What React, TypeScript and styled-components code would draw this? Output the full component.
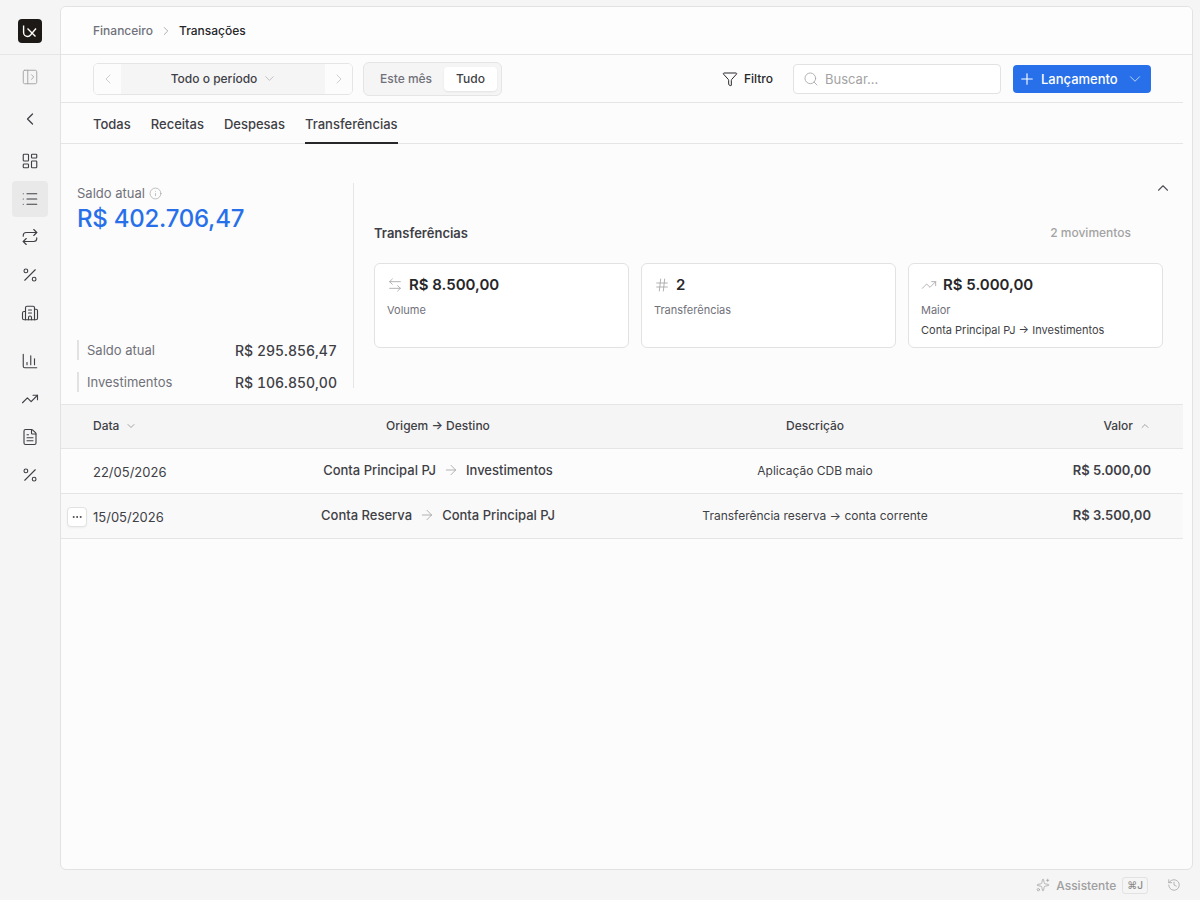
import React from 'react';
import styled, { createGlobalStyle } from 'styled-components';
import {
  ArrowLeftRight,
  ArrowRight,
  Building2,
  ChartColumn,
  ChevronDown,
  ChevronLeft,
  ChevronRight,
  ChevronUp,
  Ellipsis,
  FileText,
  Filter,
  Hash,
  History,
  Info,
  LayoutDashboard,
  List,
  PanelLeftOpen,
  Percent,
  Plus,
  Repeat,
  Search,
  Sparkles,
  TrendingUp,
} from 'lucide-react';

const GlobalStyle = createGlobalStyle`
  * { box-sizing: border-box; }
  html, body { margin: 0; height: 100%; }
  body {
    background: #f5f5f5;
    color: #27272a;
    font-family: Inter, "Noto Sans", sans-serif;
    font-size: 13px;
  }
`;

const Shell = styled.div`
  width: 1200px;
  height: 900px;
  display: flex;
  overflow: hidden;
`;

const Sidebar = styled.aside`
  width: 60px;
  flex: none;
  display: flex;
  flex-direction: column;
`;

const LogoRow = styled.div`
  height: 55px;
  flex: none;
  padding-top: 7px;
  display: flex;
  align-items: center;
  justify-content: center;
  border-bottom: 1px solid #e5e5e5;
`;

const LogoMark = styled.div`
  width: 24px;
  height: 24px;
  border-radius: 4px;
  background: #1c1917;
  display: flex;
`;

const NavList = styled.nav`
  display: flex;
  flex-direction: column;
  align-items: center;
  padding-top: 3px;
`;

const NavItem = styled.div<{ $active?: boolean; $muted?: boolean; $top?: number }>`
  width: 36px;
  height: 36px;
  margin: ${(p) => p.$top ?? 1}px 0 1px;
  border-radius: 4px;
  display: flex;
  align-items: center;
  justify-content: center;
  background: ${(p) => (p.$active ? '#e9e9e9' : 'transparent')};
  color: ${(p) => (p.$muted ? '#a3a3a3' : '#3f3f46')};
`;

const Column = styled.div`
  flex: 1;
  min-width: 0;
  display: flex;
  flex-direction: column;
  padding: 6px 7px 0 0;
`;

const Panel = styled.main`
  height: 864px;
  flex: none;
  background: #fcfcfc;
  border: 1px solid #e2e2e2;
  border-radius: 6px;
  overflow: hidden;
`;

const Breadcrumb = styled.div`
  height: 48px;
  display: flex;
  align-items: center;
  gap: 6px;
  padding-left: 32px;
  background: #fdfdfd;
  border-bottom: 1px solid #e5e5e5;
  font-size: 12px;
  font-weight: 500;
`;

const Crumb = styled.span<{ $current?: boolean }>`
  color: ${(p) => (p.$current ? '#27272a' : '#71717a')};
`;

const Body = styled.div`
  padding-right: 9px;
`;

const Toolbar = styled.div`
  height: 48px;
  display: flex;
  align-items: center;
  padding: 0 32px;
  border-bottom: 1px solid #e5e5e5;
`;

const PeriodNav = styled.div`
  width: 260px;
  height: 32px;
  display: flex;
  border: 1px solid #e5e5e5;
  border-radius: 5px;
  overflow: hidden;
  color: #c4c4c4;
`;

const PeriodArrow = styled.div`
  width: 27px;
  flex: none;
  display: flex;
  align-items: center;
  justify-content: center;
  background: #fcfcfc;
`;

const PeriodLabel = styled.div`
  flex: 1;
  padding-left: 2px;
  display: flex;
  align-items: center;
  justify-content: center;
  gap: 5px;
  background: #f5f5f5;
  color: #3f3f46;
  font-size: 12px;
  font-weight: 500;
`;

const Segment = styled.div`
  height: 34px;
  margin-left: 10px;
  padding: 4px;
  display: flex;
  align-items: center;
  background: #f5f5f5;
  border: 1px solid #e5e5e5;
  border-radius: 6px;
`;

const SegmentItem = styled.div<{ $active?: boolean }>`
  height: 24px;
  padding: 0 12px;
  display: flex;
  align-items: center;
  border-radius: 4px;
  font-size: 12px;
  font-weight: 500;
  color: ${(p) => (p.$active ? '#3f3f46' : '#71717a')};
  background: ${(p) => (p.$active ? '#fff' : 'transparent')};
  box-shadow: ${(p) => (p.$active ? '0 1px 2px rgba(0,0,0,0.08)' : 'none')};
`;

const Spacer = styled.div`
  flex: 1;
`;

const FilterButton = styled.div`
  display: flex;
  align-items: center;
  gap: 6px;
  margin-right: 20px;
  font-size: 12px;
  font-weight: 500;
  color: #27272a;
`;

const SearchBox = styled.div`
  width: 208px;
  height: 30px;
  display: flex;
  align-items: center;
  gap: 6px;
  padding: 0 9px;
  background: #fff;
  border: 1px solid #e2e2e2;
  border-radius: 4px;
  font-size: 13px;
  color: #a3a3a3;
`;

const PrimaryButton = styled.div`
  width: 138px;
  height: 28px;
  margin-left: 12px;
  display: flex;
  align-items: center;
  padding: 0 7px 0 5px;
  gap: 5px;
  background: #2870ea;
  border-radius: 4px;
  color: #fff;
  font-size: 13px;
  font-weight: 500;
`;

const PrimaryCaret = styled.span`
  margin-left: auto;
  display: flex;
  color: #c5d9fa;
`;

const Tabs = styled.div`
  height: 41px;
  display: flex;
  gap: 20px;
  padding: 0 32px;
  border-bottom: 1px solid #e5e5e5;
`;

const Tab = styled.div<{ $active?: boolean }>`
  height: 41px;
  padding-top: 13px;
  font-size: 13px;
  font-weight: 500;
  color: #3f3f46;
  border-bottom: 2px solid ${(p) => (p.$active ? '#27272a' : 'transparent')};
`;

const Summary = styled.section`
  height: 261px;
  position: relative;
  display: flex;
  padding: 39px 20px 16px 16px;
  border-bottom: 1px solid #e5e5e5;
`;

const BalanceColumn = styled.div`
  width: 277px;
  flex: none;
  display: flex;
  flex-direction: column;
  padding-right: 16px;
  border-right: 1px solid #e5e5e5;
`;

const BalanceLabel = styled.div`
  display: flex;
  align-items: center;
  gap: 4px;
  font-size: 13px;
  line-height: 21px;
  color: #71717a;
`;

const BalanceTotal = styled.div`
  font-size: 24px;
  line-height: 30px;
  font-weight: 500;
  letter-spacing: -0.24px;
  color: #2870ea;
`;

const BalanceRows = styled.div`
  margin-top: auto;
  margin-bottom: -4px;
  display: flex;
  flex-direction: column;
  gap: 12px;
`;

const BalanceRow = styled.div`
  height: 20px;
  display: flex;
  align-items: center;
  justify-content: space-between;
  padding-left: 8px;
  border-left: 2px solid #e2e2e2;
  font-size: 13px;
  color: #71717a;
`;

const BalanceValue = styled.span`
  font-size: 14px;
  font-weight: 500;
  font-variant-numeric: tabular-nums;
  color: #3f3f46;
`;

const Detail = styled.div`
  flex: 1;
  min-width: 0;
  display: flex;
  flex-direction: column;
  padding: 41px 0 0 20px;
`;

const DetailHeader = styled.div`
  height: 18px;
  margin-bottom: 21px;
  padding-right: 32px;
  display: flex;
  align-items: center;
  justify-content: space-between;
`;

const DetailTitle = styled.div`
  font-size: 13px;
  font-weight: 600;
  color: #3f3f46;
`;

const DetailCount = styled.div`
  margin-bottom: 2px;
  font-size: 12px;
  font-weight: 500;
  color: #a3a3a3;
`;

const CollapseButton = styled.div`
  position: absolute;
  top: 35px;
  right: 11px;
  display: flex;
  color: #52525b;
`;

const Cards = styled.div`
  display: grid;
  grid-template-columns: repeat(3, 1fr);
  gap: 12px;
`;

const Card = styled.div`
  height: 85px;
  padding: 11px 12px;
  background: #fff;
  border: 1px solid #e2e2e2;
  border-radius: 6px;
`;

const CardValue = styled.div`
  display: flex;
  align-items: center;
  gap: 6px;
  font-size: 15px;
  line-height: 20px;
  font-weight: 600;
  color: #27272a;

  svg {
    color: #a3a3a3;
  }
`;

const CardLabel = styled.div`
  margin-top: 7px;
  font-size: 11px;
  line-height: 16px;
  color: #71717a;
`;

const CardNote = styled.div`
  margin-top: 4px;
  font-size: 11px;
  line-height: 16px;
  color: #3f3f46;
`;

const tableColumns = '170px 350px 404px 1fr';

const TableHead = styled.div`
  height: 44px;
  display: grid;
  grid-template-columns: ${tableColumns};
  align-items: center;
  padding: 0 32px 2px;
  background: #f5f5f5;
  border-bottom: 1px solid #e5e5e5;
  font-size: 12px;
  font-weight: 500;
`;

const HeadCell = styled.div<{ $align?: string }>`
  display: flex;
  align-items: center;
  gap: 6px;
  justify-content: ${(p) => p.$align ?? 'flex-start'};
  color: #3f3f46;

  svg {
    color: #a3a3a3;
  }
`;

const Row = styled.div<{ $hover?: boolean }>`
  height: 45px;
  position: relative;
  display: grid;
  grid-template-columns: ${tableColumns};
  align-items: center;
  padding: 0 32px;
  background: ${(p) => (p.$hover ? '#f9f9f9' : 'transparent')};
  border-bottom: 1px solid #e5e5e5;
  font-size: 12px;
`;

const DateCell = styled.div`
  padding-top: 2px;
  font-size: 13px;
  color: #3f3f46;
`;

const Route = styled.div`
  padding-bottom: 2px;
  display: flex;
  align-items: center;
  justify-content: center;
  gap: 7px;
  font-size: 13px;
  font-weight: 500;
  color: #3f3f46;

  svg {
    color: #a3a3a3;
  }
`;

const DescriptionCell = styled.div`
  padding-bottom: 2px;
  text-align: center;
  color: #3f3f46;
`;

const AmountCell = styled.div`
  padding-bottom: 2px;
  text-align: right;
  font-size: 13px;
  font-weight: 600;
  color: #3f3f46;
`;

const RowAction = styled.div`
  position: absolute;
  left: 6px;
  top: 13px;
  width: 20px;
  height: 20px;
  display: flex;
  align-items: center;
  justify-content: center;
  background: #fff;
  border: 1px solid #e2e2e2;
  border-radius: 4px;
  box-shadow: 0 1px 2px rgba(0, 0, 0, 0.05);
  color: #3f3f46;
`;

const Footer = styled.footer`
  height: 30px;
  padding-right: 12px;
  display: flex;
  align-items: center;
  justify-content: flex-end;
  gap: 6px;
  color: #9f9f9f;
  font-size: 12px;
  font-weight: 500;
`;

const Kbd = styled.span`
  height: 17px;
  margin-right: 13px;
  padding: 0 4px;
  display: flex;
  align-items: center;
  border: 1px solid #e2e2e2;
  border-radius: 3px;
  font-size: 10px;
  color: #8a8a8a;
`;

const navTop = [
  { icon: LayoutDashboard, top: 5 },
  { icon: List, active: true },
  { icon: Repeat },
  { icon: Percent },
  { icon: Building2 },
];

const navBottom = [
  { icon: ChartColumn, top: 11 },
  { icon: TrendingUp },
  { icon: FileText },
  { icon: Percent },
];

const transfers = [
  { date: '22/05/2026', from: 'Conta Principal PJ', to: 'Investimentos', note: 'Aplicação CDB maio', amount: 'R$ 5.000,00' },
  { date: '15/05/2026', from: 'Conta Reserva', to: 'Conta Principal PJ', note: 'Transferência reserva → conta corrente', amount: 'R$ 3.500,00', hover: true },
];

const App: React.FC = () => {
  return (
    <Shell>
      <GlobalStyle />
      <Sidebar>
        <LogoRow>
          <LogoMark>
            <svg width="24" height="24" viewBox="0 0 24 24" fill="none" stroke="#fff" strokeWidth="1.4">
              <path d="M5.6 6.5v7a4 4 0 0 0 4 4 4 4 0 0 0 3-1.5" />
              <path d="M9.5 9.5l8 8M18 9.5l-5.5 6.5" />
            </svg>
          </LogoMark>
        </LogoRow>
        <NavList>
          <NavItem $muted>
            <PanelLeftOpen size={18} strokeWidth={1.25} />
          </NavItem>
          <NavItem $top={5}>
            <ChevronLeft size={20} strokeWidth={1.5} />
          </NavItem>
          {navTop.map((item, index) => (
            <NavItem key={index} $active={item.active} $top={item.top}>
              <item.icon size={18} strokeWidth={1.5} />
            </NavItem>
          ))}
          {navBottom.map((item, index) => (
            <NavItem key={index} $top={item.top}>
              <item.icon size={18} strokeWidth={1.5} />
            </NavItem>
          ))}
        </NavList>
      </Sidebar>
      <Column>
        <Panel>
          <Breadcrumb>
            <Crumb>Financeiro</Crumb>
            <ChevronRight size={14} color="#a3a3a3" strokeWidth={1.5} />
            <Crumb $current>Transações</Crumb>
          </Breadcrumb>
          <Body>
            <Toolbar>
              <PeriodNav>
                <PeriodArrow>
                  <ChevronLeft size={16} strokeWidth={1.25} />
                </PeriodArrow>
                <PeriodLabel>
                  Todo o período
                  <ChevronDown size={15} color="#b4b4b4" strokeWidth={1.25} />
                </PeriodLabel>
                <PeriodArrow>
                  <ChevronRight size={16} strokeWidth={1.25} />
                </PeriodArrow>
              </PeriodNav>
              <Segment>
                <SegmentItem>Este mês</SegmentItem>
                <SegmentItem $active>Tudo</SegmentItem>
              </Segment>
              <Spacer />
              <FilterButton>
                <Filter size={16} strokeWidth={1.5} />
                Filtro
              </FilterButton>
              <SearchBox>
                <Search size={16} strokeWidth={1.25} />
                Buscar...
              </SearchBox>
              <PrimaryButton>
                <Plus size={18} strokeWidth={1.5} />
                Lançamento
                <PrimaryCaret>
                  <ChevronDown size={18} strokeWidth={1.25} />
                </PrimaryCaret>
              </PrimaryButton>
            </Toolbar>
            <Tabs>
              <Tab>Todas</Tab>
              <Tab>Receitas</Tab>
              <Tab>Despesas</Tab>
              <Tab $active>Transferências</Tab>
            </Tabs>
            <Summary>
              <BalanceColumn>
                <BalanceLabel>
                  Saldo atual
                  <Info size={13} color="#a3a3a3" strokeWidth={1.25} />
                </BalanceLabel>
                <BalanceTotal>R$ 402.706,47</BalanceTotal>
                <BalanceRows>
                  <BalanceRow>
                    Saldo atual
                    <BalanceValue>R$ 295.856,47</BalanceValue>
                  </BalanceRow>
                  <BalanceRow>
                    Investimentos
                    <BalanceValue>R$ 106.850,00</BalanceValue>
                  </BalanceRow>
                </BalanceRows>
              </BalanceColumn>
              <Detail>
                <DetailHeader>
                  <DetailTitle>Transferências</DetailTitle>
                  <DetailCount>2 movimentos</DetailCount>
                </DetailHeader>
                <Cards>
                  <Card>
                    <CardValue>
                      <ArrowLeftRight size={16} strokeWidth={1.25} />
                      R$ 8.500,00
                    </CardValue>
                    <CardLabel>Volume</CardLabel>
                  </Card>
                  <Card>
                    <CardValue>
                      <Hash size={16} strokeWidth={1.25} />2
                    </CardValue>
                    <CardLabel>Transferências</CardLabel>
                  </Card>
                  <Card>
                    <CardValue>
                      <TrendingUp size={16} strokeWidth={1.25} />
                      R$ 5.000,00
                    </CardValue>
                    <CardLabel>Maior</CardLabel>
                    <CardNote>Conta Principal PJ → Investimentos</CardNote>
                  </Card>
                </Cards>
              </Detail>
              <CollapseButton>
                <ChevronUp size={18} strokeWidth={1.5} />
              </CollapseButton>
            </Summary>
            <TableHead>
              <HeadCell>
                Data
                <ChevronDown size={12} />
              </HeadCell>
              <HeadCell $align="center">Origem → Destino</HeadCell>
              <HeadCell $align="center">Descrição</HeadCell>
              <HeadCell $align="flex-end">
                Valor
                <ChevronUp size={12} />
              </HeadCell>
            </TableHead>
            {transfers.map((item) => (
              <Row key={item.date} $hover={item.hover}>
                {item.hover && (
                  <RowAction>
                    <Ellipsis size={12} />
                  </RowAction>
                )}
                <DateCell>{item.date}</DateCell>
                <Route>
                  {item.from}
                  <ArrowRight size={16} strokeWidth={1.25} />
                  {item.to}
                </Route>
                <DescriptionCell>{item.note}</DescriptionCell>
                <AmountCell>{item.amount}</AmountCell>
              </Row>
            ))}
          </Body>
        </Panel>
        <Footer>
          <Sparkles size={14} strokeWidth={1.25} />
          Assistente
          <Kbd>⌘J</Kbd>
          <History size={14} strokeWidth={1.25} />
        </Footer>
      </Column>
    </Shell>
  );
};

export default App;
